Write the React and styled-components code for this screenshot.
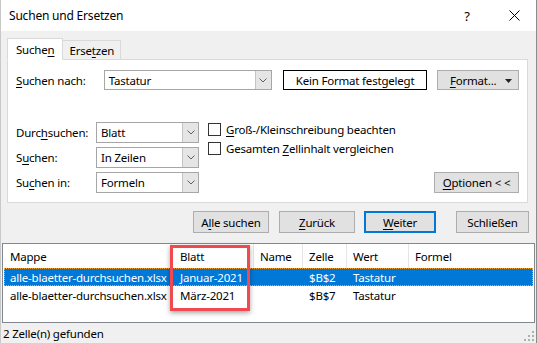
import React from 'react'
import styled, { createGlobalStyle } from 'styled-components';

const Global = createGlobalStyle`
    html, body { margin:0; padding:0; background:#fff; }
    body { font-family:"Noto Sans", "DejaVu Sans", sans-serif; font-size:11.5px; letter-spacing:-0.2px; color:#000; }
    * { box-sizing:border-box; }
`;

const Window = styled.div`
    width:537px;
    height:343px;
    background:#f0f0f0;
    border-right:1px solid #8c8c8c;
    border-left:1px solid #c9c9c9;
    display:flex;
    flex-direction:column;
    position:relative;
    overflow:hidden;
`;

const TitleBar = styled.div`
    height:31px;
    background:#fff;
    display:flex;
    align-items:center;
    padding:0 0 0 8px;
    font-size:12px;
    .title{ flex:1; }
    .help{ width:30px; text-align:center; margin-right:10px; font-size:13px; }
    .close{ width:44px; display:flex; justify-content:center; }
`;

const Tabs = styled.div`
    display:flex;
    align-items:flex-end;
    height:28px;
    padding:0 0 0 6px;
    position:relative;
    z-index:1;
`;

const Tab = styled.div`
    height:${p => p.$active ? '22px' : '19px'};
    padding:0 ${p => p.$active ? '8px' : '6px'};
    background:${p => p.$active ? '#fff' : '#f0f0f0'};
    border:1px solid #d9d9d9;
    border-bottom:${p => p.$active ? '1px solid #fff' : 'none'};
    margin-bottom:${p => p.$active ? '-1px' : '0'};
    margin-left:${p => p.$active ? '0' : '-1px'};
    display:flex;
    align-items:center;
`;

const Panel = styled.div`
    margin:0 8px 0 6px;
    height:144px;
    background:#fff;
    border:1px solid #d9d9d9;
    padding:10px 8px 0 8px;
`;

const Row = styled.div`
    display:flex;
    align-items:center;
    height:${p => p.$h || 20}px;
`;

const Label = styled.div`
    width:${p => p.$w || 80}px;
`;

const Combo = styled.div`
    width:${p => p.$w}px;
    height:${p => p.$h || 21}px;
    border:1px solid #a6a6a6;
    display:flex;
    background:#fff;
    .value{ flex:1; padding-left:4px; display:flex; align-items:center; }
    .drop{
        width:16px;
        background:#e5e5e5;
        border-left:1px solid #c4c4c4;
        display:flex;
        align-items:center;
        justify-content:center;
    }
`;

const FormatBox = styled.div`
    width:145px;
    height:20px;
    margin-left:11px;
    border:1px solid #000;
    display:flex;
    align-items:center;
    justify-content:center;
`;

const Button = styled.div`
    width:${p => p.$w}px;
    height:${p => p.$h || 22}px;
    background:#e1e1e1;
    border:${p => p.$focus ? '2px solid #0078d7' : '1px solid #adadad'};
    display:flex;
    align-items:center;
    justify-content:center;
    margin-left:${p => p.$ml || 0}px;
    position:relative;
`;

const Lower = styled.div`
    display:flex;
    margin-top:32px;
`;

const ComboCol = styled.div`
    display:flex;
    flex-direction:column;
    gap:4px;
`;

const CheckCol = styled.div`
    display:flex;
    flex-direction:column;
    gap:6px;
    margin-left:9px;
    padding-top:1px;
`;

const Check = styled.div`
    display:flex;
    align-items:center;
    height:13px;
    gap:5px;
    .box{ width:13px; height:13px; border:1px solid #333; background:#fff; }
`;

const OptCol = styled.div`
    flex:1;
    display:flex;
    justify-content:flex-end;
    align-items:flex-end;
`;

const ButtonRow = styled.div`
    display:flex;
    justify-content:flex-end;
    padding:8px 7px 0 0;
    height:40px;
`;

const List = styled.div`
    margin:0 1px 0 1px;
    height:80px;
    background:#fff;
    border:1px solid #828790;
    position:relative;
`;

const HeaderRow = styled.div`
    display:flex;
    height:24px;
    align-items:center;
`;

const Cell = styled.div`
    width:${p => p.$w}px;
    padding-left:${p => p.$pl ?? 6}px;
    height:100%;
    display:flex;
    align-items:center;
    white-space:nowrap;
    overflow:hidden;
    border-right:${p => p.$sep ? '1px solid #e5e5e5' : 'none'};
    flex:${p => p.$grow ? 1 : 'none'};
`;

const DataRow = styled.div`
    display:flex;
    height:18px;
    margin:0 1px;
    background:${p => p.$sel ? '#0078d7' : 'transparent'};
    color:${p => p.$sel ? '#fff' : '#000'};
    border:1px ${p => p.$sel ? 'dotted #f7a234' : 'solid transparent'};
`;

const Highlight = styled.div`
    position:absolute;
    left:167px;
    top:1px;
    width:80px;
    height:66px;
    border:3px solid #f04a50;
    box-shadow:0 2px 5px rgba(0,0,0,0.35);
`;

const StatusBar = styled.div`
    flex:1;
    display:flex;
    align-items:center;
    padding-left:2px;
    position:relative;
    .grip{ position:absolute; right:2px; bottom:2px; }
`;

const U = styled.span`
    text-decoration:underline;
    text-underline-offset:2px;
`;

const Chevron = () => (
    <svg width="8" height="5" viewBox="0 0 8 5"><path d="M0.5 0.5 L4 4 L7.5 0.5" fill="none" stroke="#606060" strokeWidth="1" /></svg>
);

const columns = [
    { key: 'mappe', label: 'Mappe', w: 169 },
    { key: 'blatt', label: 'Blatt', w: 82, pl: 8 },
    { key: 'name', label: 'Name', w: 49 },
    { key: 'zelle', label: 'Zelle', w: 44 },
    { key: 'wert', label: 'Wert', w: 62 },
    { key: 'formel', label: 'Formel', grow: true },
];

const rows = [
    { mappe: 'alle-blaetter-durchsuchen.xlsx', blatt: 'Januar-2021', name: '', zelle: '$B$2', wert: 'Tastatur', formel: '', sel: true },
    { mappe: 'alle-blaetter-durchsuchen.xlsx', blatt: 'März-2021', name: '', zelle: '$B$7', wert: 'Tastatur', formel: '' },
];

const searchOptions = [
    [<>Durc<U>h</U>suchen:</>, 'Blatt'],
    [<>S<U>u</U>chen:</>, 'In Zeilen'],
    [<>Su<U>c</U>hen in:</>, 'Formeln'],
];

export default function App() {
    return (
        <Window>
            <Global />
            <TitleBar>
                <div className="title">Suchen und Ersetzen</div>
                <div className="help">?</div>
                <div className="close">
                    <svg width="11" height="11" viewBox="0 0 11 11"><path d="M0.5 0.5 L10.5 10.5 M10.5 0.5 L0.5 10.5" stroke="#000" strokeWidth="1" /></svg>
                </div>
            </TitleBar>
            <Tabs>
                <Tab $active>Suche<U>n</U></Tab>
                <Tab>Erse<U>t</U>zen</Tab>
            </Tabs>
            <Panel>
                <Row>
                    <Label $w={88}><U>S</U>uchen nach:</Label>
                    <Combo $w={169} $h={20}>
                        <div className="value">Tastatur</div>
                        <div className="drop"><Chevron /></div>
                    </Combo>
                    <FormatBox>Kein Format festgelegt</FormatBox>
                    <Button $w={82} $h={20} $ml={10}>
                        <span style={{ marginRight: 10 }}><U>F</U>ormat...</span>
                        <svg width="7" height="4" viewBox="0 0 7 4" style={{ position: 'absolute', right: 6, top: 8 }}><path d="M0 0 L7 0 L3.5 4 Z" fill="#222" /></svg>
                    </Button>
                </Row>
                <Lower>
                    <ComboCol>
                        {searchOptions.map(([label, value], i) => (
                            <Row key={i} $h={21}>
                                <Label $w={80}>{label}</Label>
                                <Combo $w={103}>
                                    <div className="value">{value}</div>
                                    <div className="drop"><Chevron /></div>
                                </Combo>
                            </Row>
                        ))}
                    </ComboCol>
                    <CheckCol>
                        <Check><div className="box" /><span><U>G</U>roß-/Kleinschreibung beachten</span></Check>
                        <Check><div className="box" /><span>Gesamten <U>Z</U>ellinhalt vergleichen</span></Check>
                    </CheckCol>
                    <OptCol>
                        <Button $w={85} $h={21}><span><U>O</U>ptionen &lt; &lt;</span></Button>
                    </OptCol>
                </Lower>
            </Panel>
            <ButtonRow>
                <Button $w={76}><span>A<U>l</U>le suchen</span></Button>
                <Button $w={76} $ml={10}><span><U>Z</U>urück</span></Button>
                <Button $w={72} $ml={9} $focus><span><U>W</U>eiter</span></Button>
                <Button $w={73} $ml={20}>Schließen</Button>
            </ButtonRow>
            <List>
                <HeaderRow>
                    {columns.map((c, i) => (
                        <Cell key={c.key} $w={c.w} $pl={c.pl ?? (i === 0 ? 7 : 6)} $grow={c.grow} $sep={!c.grow}>{c.label}</Cell>
                    ))}
                </HeaderRow>
                {rows.map((r, ri) => (
                    <DataRow key={ri} $sel={r.sel}>
                        {columns.map((c, i) => (
                            <Cell key={c.key} $w={c.w - (i === 0 ? 2 : 0)} $pl={c.pl ?? (i === 0 ? 5 : 6)} $grow={c.grow}>{r[c.key]}</Cell>
                        ))}
                    </DataRow>
                ))}
                <Highlight />
            </List>
            <StatusBar>
                2 Zelle(n) gefunden
                <svg className="grip" width="10" height="10" viewBox="0 0 10 10" fill="#b0b0b0">
                    <rect x="8" y="0" width="2" height="2" />
                    <rect x="4" y="4" width="2" height="2" /><rect x="8" y="4" width="2" height="2" />
                    <rect x="0" y="8" width="2" height="2" /><rect x="4" y="8" width="2" height="2" /><rect x="8" y="8" width="2" height="2" />
                </svg>
            </StatusBar>
        </Window>
    )
}
